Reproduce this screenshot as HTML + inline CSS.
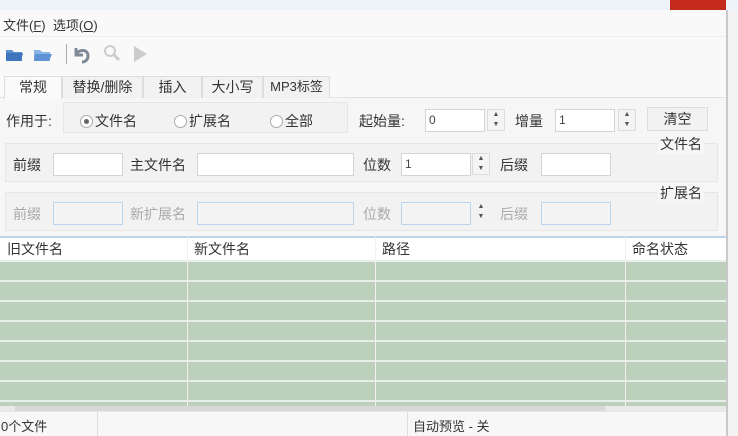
<!DOCTYPE html><html><head><style>
*{margin:0;padding:0;box-sizing:border-box}
body{width:738px;height:436px;background:#f3f3f3;font-family:"Liberation Sans","Noto Sans CJK SC",sans-serif;font-size:14px;color:#333;position:relative;overflow:hidden}
.a{position:absolute;white-space:nowrap}
.inp{position:absolute;background:#fff;border:1px solid #d4d4d4;height:23px;font-size:12px;padding:3px 3px;color:#444}
.dis{background:#f4f4f4;border-color:#b9d5ef}
.sp{position:absolute;width:18px;height:22px;border:1px solid #ddd;background:#f4f4f4;font-size:7px;color:#555;text-align:center;line-height:10px}
.g{color:#aaa}
.tab{position:absolute;top:76px;height:22px;border:1px solid #ddd;border-bottom:none;background:#f2f2f2;text-align:center;line-height:20px;font-size:14px}
.vl{position:absolute;top:237px;width:1px;height:170px;background:#fff}
.hl{position:absolute;left:0;width:726px;height:2px;background:#e8eee8}
.r{display:inline-block;width:13px;height:13px;border:1px solid #aaa;border-radius:50%;vertical-align:-2px;margin-right:2px;background:#fff;position:relative}
.r.on::after{content:"";position:absolute;left:3px;top:3px;width:5px;height:5px;border-radius:50%;background:#666}
</style></head><body>
<div class="a" style="left:0;top:0;width:738px;height:10px;background:#eef3fa"></div>
<div class="a" style="left:670px;top:0;width:56px;height:10px;background:#c42b1c"></div>
<div class="a" style="left:0;top:10px;width:726px;height:426px;background:#f9f9f9"></div>
<div class="a" style="left:726px;top:10px;width:2px;height:426px;background:#c9c9c9"></div>
<div class="a" style="left:3px;top:15px;font-size:13px">文件(<u>F</u>)&nbsp;&nbsp;选项(<u>O</u>)</div>
<div class="a" style="left:0;top:36px;width:726px;height:1px;background:#eee"></div>
<svg class="a" style="left:4px;top:42px" width="150" height="22">
<path d="M2 8h6l2 2h8v9H2z" fill="#5b8fd0"/><path d="M2 11h17l-2 8H2z" fill="#3f75bf"/>
<path d="M30 8h6l2 2h8v9H30z" fill="#8bb4e6"/><path d="M31 12h17l-3 7H30z" fill="#5d92d6"/>
<rect x="62" y="2" width="1" height="20" fill="#aaa"/>
<path d="M72 6v7h7M72 12c4-5 12-5 12 2c0 4-3 6-6 6" fill="none" stroke="#7f8a99" stroke-width="3"/>
<circle cx="106" cy="9" r="5" fill="none" stroke="#ccc" stroke-width="2"/><path d="M110 13l5 5" stroke="#ccc" stroke-width="3"/>
<path d="M130 4l13 8-13 8z" fill="#ccc"/>
</svg>
<div class="a" style="left:0;top:97px;width:726px;height:140px;background:#f6f6f6;border-top:1px solid #e2e2e2"></div>
<div class="tab" style="left:4px;width:58px;background:#fafafa;height:23px">常规</div>
<div class="tab" style="left:62px;width:81px">替换/删除</div>
<div class="tab" style="left:143px;width:59px">插入</div>
<div class="tab" style="left:202px;width:61px">大小写</div>
<div class="tab" style="left:263px;width:67px;font-size:13px">MP3标签</div>
<div class="a" style="left:6px;top:111px">作用于:</div>
<div class="a" style="left:63px;top:102px;width:285px;height:31px;border:1px solid #e6e6e6;background:#f2f2f2"></div>
<div class="a" style="left:80px;top:111px"><span class="r on"></span>文件名</div>
<div class="a" style="left:174px;top:111px"><span class="r"></span>扩展名</div>
<div class="a" style="left:270px;top:111px"><span class="r"></span>全部</div>
<div class="a" style="left:359px;top:111px">起始量:</div>
<div class="inp" style="left:425px;top:109px;width:60px">0</div>
<div class="sp" style="left:487px;top:109px">▲<br>▼</div>
<div class="a" style="left:515px;top:111px">增量</div>
<div class="inp" style="left:555px;top:109px;width:60px">1</div>
<div class="sp" style="left:618px;top:109px">▲<br>▼</div>
<div class="a" style="left:647px;top:107px;width:61px;height:24px;border:1px solid #ddd;background:#f2f2f2;text-align:center;line-height:22px">清空</div>
<div class="a" style="left:5px;top:143px;width:713px;height:39px;border:1px solid #e6e6e6;background:#f2f2f2"></div>
<div class="a" style="left:658px;top:134px;background:#f6f6f6;padding:0 2px">文件名</div>
<div class="a" style="left:13px;top:155px">前缀</div>
<div class="inp" style="left:53px;top:153px;width:70px"></div>
<div class="a" style="left:130px;top:155px">主文件名</div>
<div class="inp" style="left:197px;top:153px;width:157px"></div>
<div class="a" style="left:363px;top:155px">位数</div>
<div class="inp" style="left:401px;top:153px;width:70px">1</div>
<div class="sp" style="left:472px;top:153px">▲<br>▼</div>
<div class="a" style="left:500px;top:155px">后缀</div>
<div class="inp" style="left:541px;top:153px;width:70px"></div>
<div class="a" style="left:5px;top:192px;width:713px;height:39px;border:1px solid #e6e6e6;background:#f2f2f2"></div>
<div class="a" style="left:658px;top:183px;background:#f6f6f6;padding:0 2px">扩展名</div>
<div class="a g" style="left:13px;top:204px">前缀</div>
<div class="inp dis" style="left:53px;top:202px;width:70px"></div>
<div class="a g" style="left:130px;top:204px">新扩展名</div>
<div class="inp dis" style="left:197px;top:202px;width:157px"></div>
<div class="a g" style="left:363px;top:204px">位数</div>
<div class="inp dis" style="left:401px;top:202px;width:70px"></div>
<div class="sp" style="left:472px;top:202px;border:none;background:none">▲<br>▼</div>
<div class="a g" style="left:500px;top:204px">后缀</div>
<div class="inp dis" style="left:541px;top:202px;width:70px"></div>
<div class="a" style="left:0;top:236px;width:726px;height:2px;background:#bfd3ea"></div>
<div class="a" style="left:0;top:238px;width:726px;height:22px;background:#fff"></div>
<div class="a" style="left:7px;top:239px">旧文件名</div>
<div class="a" style="left:194px;top:239px">新文件名</div>
<div class="a" style="left:382px;top:239px">路径</div>
<div class="a" style="left:632px;top:239px">命名状态</div>
<div class="a" style="left:0;top:260px;width:726px;height:147px;background:#bdd0bc"></div>
<div class="hl" style="top:260px"></div><div class="hl" style="top:280px"></div><div class="hl" style="top:300px"></div><div class="hl" style="top:320px"></div><div class="hl" style="top:340px"></div><div class="hl" style="top:360px"></div><div class="hl" style="top:380px"></div><div class="hl" style="top:400px"></div>
<div class="vl" style="left:187px;background:#f0f0f0"></div><div class="vl" style="left:375px;background:#f0f0f0"></div><div class="vl" style="left:625px;background:#f0f0f0"></div>
<div class="a" style="left:0;top:406px;width:726px;height:5px;background:#e9e9e9"></div>
<div class="a" style="left:15px;top:406px;width:590px;height:5px;background:#d8d8d8"></div>
<div class="a" style="left:0;top:411px;width:726px;height:25px;background:#f7f7f7;border-top:1px solid #e5e5e5"></div>
<div class="a" style="left:97px;top:412px;width:1px;height:24px;background:#ddd"></div>
<div class="a" style="left:407px;top:412px;width:1px;height:24px;background:#ddd"></div>
<div class="a" style="left:1px;top:416px;font-size:13px">0个文件</div>
<div class="a" style="left:413px;top:416px;font-size:13px">自动预览 - 关</div>
</body></html>
